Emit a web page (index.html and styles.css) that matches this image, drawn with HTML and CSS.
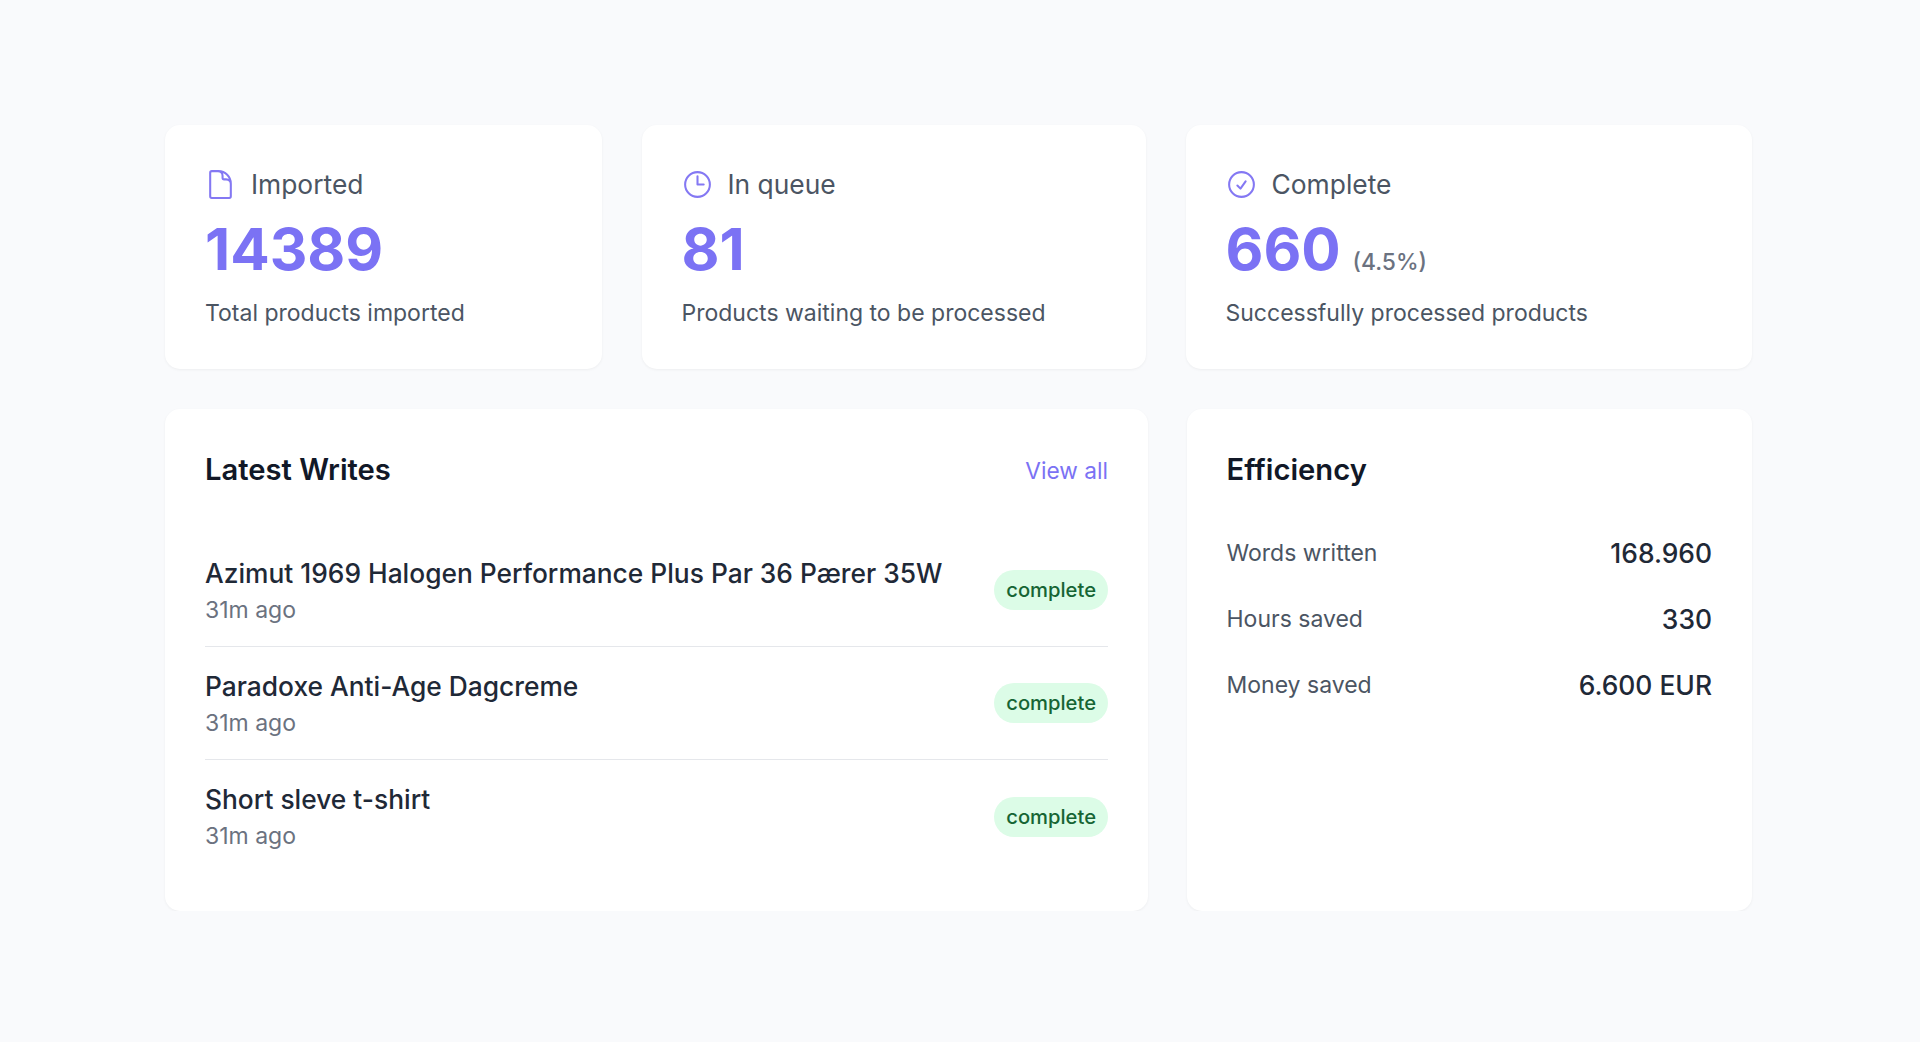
FILE: index.html
```html
<!DOCTYPE html>
<html lang="en">

<head>
    <meta charset="UTF-8">
    <meta name="viewport" content="width=device-width, initial-scale=1.0">
    <title>Dashboard</title>
    <link rel="stylesheet" href="styles.css">
</head>

<body>
    <main class="dashboard">
        <section class="stats-row">
            <div class="card stat-card stat-imported">
                <div class="stat-head">
                    <svg class="stat-icon" viewBox="0 0 24 24" fill="none" stroke="currentColor" stroke-width="1.5" stroke-linecap="round" stroke-linejoin="round">
                        <path d="M19.5 14.25v-2.625a3.375 3.375 0 0 0-3.375-3.375h-1.5A1.125 1.125 0 0 1 13.5 7.125v-1.5a3.375 3.375 0 0 0-3.375-3.375H8.25m2.25 0H5.625c-.621 0-1.125.504-1.125 1.125v17.25c0 .621.504 1.125 1.125 1.125h12.75c.621 0 1.125-.504 1.125-1.125V11.25a9 9 0 0 0-9-9Z"/>
                    </svg>
                    <span>Imported</span>
                </div>
                <div class="stat-value">14389</div>
                <p class="stat-note">Total products imported</p>
            </div>
            <div class="card stat-card stat-queue">
                <div class="stat-head">
                    <svg class="stat-icon" viewBox="0 0 24 24" fill="none" stroke="currentColor" stroke-width="1.5" stroke-linecap="round" stroke-linejoin="round">
                        <path d="M12 6v6h4.5m4.5 0a9 9 0 1 1-18 0 9 9 0 0 1 18 0Z"/>
                    </svg>
                    <span>In queue</span>
                </div>
                <div class="stat-value">81</div>
                <p class="stat-note">Products waiting to be processed</p>
            </div>
            <div class="card stat-card stat-complete">
                <div class="stat-head">
                    <svg class="stat-icon" viewBox="0 0 24 24" fill="none" stroke="currentColor" stroke-width="1.5" stroke-linecap="round" stroke-linejoin="round">
                        <path d="M9 12.75 11.25 15 15 9.75M21 12a9 9 0 1 1-18 0 9 9 0 0 1 18 0Z"/>
                    </svg>
                    <span>Complete</span>
                </div>
                <div class="stat-value">660 <small>(4.5%)</small></div>
                <p class="stat-note">Successfully processed products</p>
            </div>
        </section>

        <section class="panels-row">
            <div class="card writes-card">
                <div class="writes-head">
                    <h2>Latest Writes</h2>
                    <a href="#">View all</a>
                </div>
                <ul class="writes-list">
                    <li>
                        <div>
                            <div class="write-name">Azimut 1969 Halogen Performance Plus Par 36 Pærer 35W</div>
                            <div class="write-time">31m ago</div>
                        </div>
                        <span class="badge">complete</span>
                    </li>
                    <li>
                        <div>
                            <div class="write-name">Paradoxe Anti-Age Dagcreme</div>
                            <div class="write-time">31m ago</div>
                        </div>
                        <span class="badge">complete</span>
                    </li>
                    <li>
                        <div>
                            <div class="write-name">Short sleve t-shirt</div>
                            <div class="write-time">31m ago</div>
                        </div>
                        <span class="badge">complete</span>
                    </li>
                </ul>
            </div>
            <div class="card efficiency-card">
                <h2>Efficiency</h2>
                <dl class="efficiency-list">
                    <div>
                        <dt>Words written</dt>
                        <dd>168.960</dd>
                    </div>
                    <div>
                        <dt>Hours saved</dt>
                        <dd>330</dd>
                    </div>
                    <div>
                        <dt>Money saved</dt>
                        <dd>6.600 EUR</dd>
                    </div>
                </dl>
            </div>
        </section>
    </main>
</body>

</html>
```
FILE: styles.css
```css
body {
    background-color: #f9fafc;
    color: #1f2937;
    font-family: Inter, sans-serif;
    margin: 0;
    padding: 0;
}

.dashboard {
    padding: 125px 168px 0 165px;
}

.card {
    background-color: white;
    border-radius: 15px;
    box-shadow: 0 1px 3px rgba(0, 0, 0, 0.05);
    box-sizing: border-box;
    padding: 40px;
}

.stats-row {
    display: flex;
    gap: 39.5px;
    margin-bottom: 40px;
}

.stat-card {
    height: 244px;
    padding-top: 41px;
}

.stat-imported {
    width: 437px;
}

.stat-queue {
    width: 504.5px;
}

.stat-complete {
    width: 566.5px;
}

.stat-head {
    display: flex;
    align-items: center;
    gap: 14px;
    color: #4b5563;
    font-size: 26.4px;
    height: 36px;
}

.stat-icon {
    width: 33px;
    height: 33px;
    margin-left: -1px;
    color: #8478f3;
}

.stat-value {
    color: #7b72f4;
    font-size: 58.4px;
    font-weight: 700;
    line-height: 72px;
    margin-top: 11px;
}

.stat-value small {
    color: #6b7280;
    font-size: 22.8px;
    font-weight: 500;
    line-height: 1;
    margin-left: -2px;
}

.stat-note {
    color: #4b5563;
    font-size: 23px;
    line-height: 28px;
    margin: 13.5px 0 0;
}

.panels-row {
    display: flex;
    gap: 38.5px;
}

.writes-card {
    width: 983px;
    height: 502px;
}

.efficiency-card {
    width: 565.5px;
    height: 502px;
}

h2 {
    font-size: 29.2px;
    font-weight: 600;
    line-height: 42px;
    color: #111827;
    margin: 0;
}

.writes-head {
    display: flex;
    justify-content: space-between;
    align-items: center;
}

.writes-head a {
    color: #7b72f4;
    font-size: 22.7px;
    text-decoration: none;
}

.writes-list {
    list-style: none;
    margin: 42.5px 0 0;
    padding: 0;
}

.writes-list li {
    display: flex;
    justify-content: space-between;
    align-items: center;
    padding: 23.5px 0 22.2px;
    border-bottom: 1px solid #e5e7eb;
}

.writes-list li:last-child {
    border-bottom: none;
}

.write-name {
    font-size: 26.35px;
    font-weight: 500;
    line-height: 33px;
    color: #1f2937;
}

.write-time {
    font-size: 23px;
    line-height: 28px;
    color: #6b7280;
    margin-top: 5.5px;
}

.badge {
    background-color: #dcfce7;
    color: #166534;
    border-radius: 20px;
    font-size: 20.2px;
    font-weight: 500;
    line-height: 24px;
    padding: 8px 12px;
}

.efficiency-list {
    margin: 29px 0 0;
}

.efficiency-list div {
    display: flex;
    justify-content: space-between;
    align-items: center;
    height: 66px;
}

.efficiency-list dt {
    color: #4b5563;
    font-size: 23px;
}

.efficiency-list dd {
    margin: 0;
    font-size: 26.4px;
    font-weight: 500;
    color: #1f2937;
}
```
